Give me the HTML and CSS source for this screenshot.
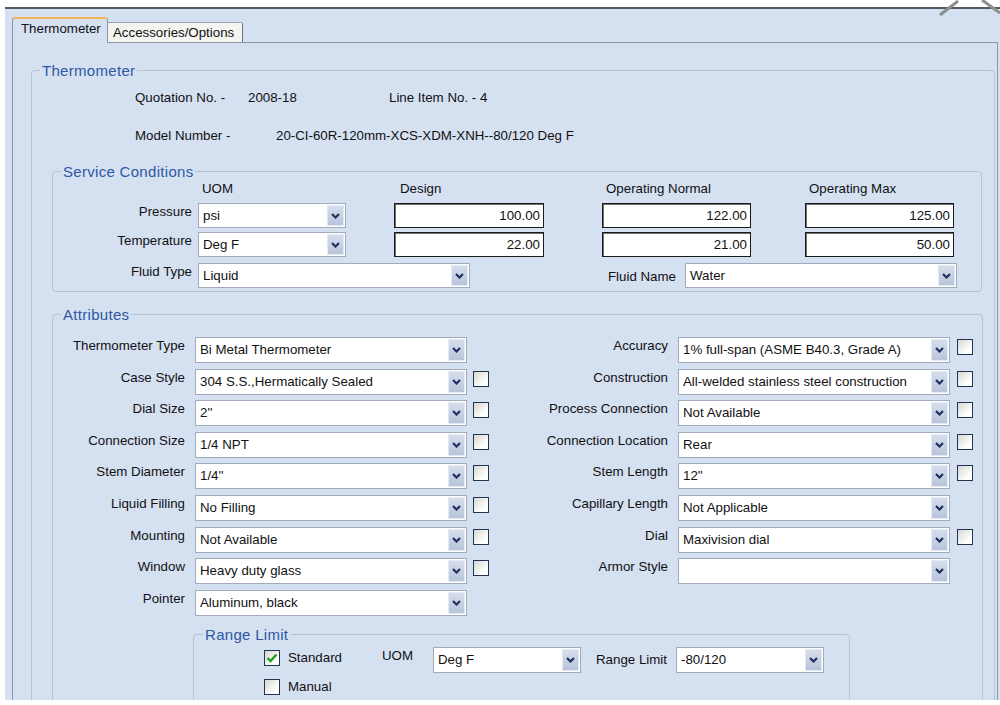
FILE: index.html
```html
<!DOCTYPE html>
<html>
<head>
<meta charset="utf-8">
<link rel="stylesheet" href="styles.css">
</head>
<body>
<div class="screen">
  <div class="topline"></div>
  <div class="frame">
    <div class="tabs">
      <div class="tab active">Thermometer</div>
      <div class="tab inactive">Accessories/Options</div>
    </div>
    <div class="panel">
      <fieldset class="group g-thermo">
        <legend>Thermometer</legend>
        <div class="info">
          <div class="info-row"><span class="il il-q">Quotation No. -</span><span class="iv-q">2008-18</span><span>Line Item No. - 4</span></div>
          <div class="info-row"><span class="il il-m">Model Number -</span><span>20-CI-60R-120mm-XCS-XDM-XNH--80/120 Deg F</span></div>
        </div>

        <fieldset class="group g-service">
          <legend>Service Conditions</legend>
          <div class="sc">
            <div class="sc-head"><span class="h-uom">UOM</span><span class="h-des">Design</span><span class="h-opn">Operating Normal</span><span>Operating Max</span></div>
            <div class="sc-row">
              <span class="sc-lbl">Pressure</span>
              <div class="sel s-uom"><span class="val">psi</span><span class="btn"><svg width="9" height="6" viewBox="0 0 9 6"><path d="M1 1 L4.5 4.5 L8 1"/></svg></span></div>
              <div class="num n-des">100.00</div>
              <div class="num n-opn">122.00</div>
              <div class="num n-opm">125.00</div>
            </div>
            <div class="sc-row sc-row2">
              <span class="sc-lbl">Temperature</span>
              <div class="sel s-uom"><span class="val">Deg F</span><span class="btn"><svg width="9" height="6" viewBox="0 0 9 6"><path d="M1 1 L4.5 4.5 L8 1"/></svg></span></div>
              <div class="num n-des">22.00</div>
              <div class="num n-opn">21.00</div>
              <div class="num n-opm">50.00</div>
            </div>
            <div class="sc-row">
              <span class="sc-lbl">Fluid Type</span>
              <div class="sel s-fluid"><span class="val">Liquid</span><span class="btn"><svg width="9" height="6" viewBox="0 0 9 6"><path d="M1 1 L4.5 4.5 L8 1"/></svg></span></div>
              <span class="fn-lbl">Fluid Name</span>
              <div class="sel s-fname"><span class="val">Water</span><span class="btn"><svg width="9" height="6" viewBox="0 0 9 6"><path d="M1 1 L4.5 4.5 L8 1"/></svg></span></div>
            </div>
          </div>
        </fieldset>

        <fieldset class="group g-attr">
          <legend>Attributes</legend>
          <div class="attr">
            <div class="acol acol-l">
              <div class="arow"><span class="a-lbl">Thermometer Type</span><div class="sel a-sel"><span class="val">Bi Metal Thermometer</span><span class="btn"><svg width="9" height="6" viewBox="0 0 9 6"><path d="M1 1 L4.5 4.5 L8 1"/></svg></span></div></div>
              <div class="arow"><span class="a-lbl">Case Style</span><div class="sel a-sel"><span class="val">304 S.S.,Hermatically Sealed</span><span class="btn"><svg width="9" height="6" viewBox="0 0 9 6"><path d="M1 1 L4.5 4.5 L8 1"/></svg></span></div><span class="chk"></span></div>
              <div class="arow"><span class="a-lbl">Dial Size</span><div class="sel a-sel"><span class="val">2''</span><span class="btn"><svg width="9" height="6" viewBox="0 0 9 6"><path d="M1 1 L4.5 4.5 L8 1"/></svg></span></div><span class="chk"></span></div>
              <div class="arow"><span class="a-lbl">Connection Size</span><div class="sel a-sel"><span class="val">1/4 NPT</span><span class="btn"><svg width="9" height="6" viewBox="0 0 9 6"><path d="M1 1 L4.5 4.5 L8 1"/></svg></span></div><span class="chk"></span></div>
              <div class="arow"><span class="a-lbl">Stem Diameter</span><div class="sel a-sel"><span class="val">1/4''</span><span class="btn"><svg width="9" height="6" viewBox="0 0 9 6"><path d="M1 1 L4.5 4.5 L8 1"/></svg></span></div><span class="chk"></span></div>
              <div class="arow"><span class="a-lbl">Liquid Filling</span><div class="sel a-sel"><span class="val">No Filling</span><span class="btn"><svg width="9" height="6" viewBox="0 0 9 6"><path d="M1 1 L4.5 4.5 L8 1"/></svg></span></div><span class="chk"></span></div>
              <div class="arow"><span class="a-lbl">Mounting</span><div class="sel a-sel"><span class="val">Not Available</span><span class="btn"><svg width="9" height="6" viewBox="0 0 9 6"><path d="M1 1 L4.5 4.5 L8 1"/></svg></span></div><span class="chk"></span></div>
              <div class="arow"><span class="a-lbl">Window</span><div class="sel a-sel"><span class="val">Heavy duty glass</span><span class="btn"><svg width="9" height="6" viewBox="0 0 9 6"><path d="M1 1 L4.5 4.5 L8 1"/></svg></span></div><span class="chk"></span></div>
              <div class="arow"><span class="a-lbl">Pointer</span><div class="sel a-sel"><span class="val">Aluminum, black</span><span class="btn"><svg width="9" height="6" viewBox="0 0 9 6"><path d="M1 1 L4.5 4.5 L8 1"/></svg></span></div></div>
            </div>
            <div class="acol acol-r">
              <div class="arow"><span class="a-lbl">Accuracy</span><div class="sel a-sel"><span class="val">1% full-span (ASME B40.3, Grade A)</span><span class="btn"><svg width="9" height="6" viewBox="0 0 9 6"><path d="M1 1 L4.5 4.5 L8 1"/></svg></span></div><span class="chk"></span></div>
              <div class="arow"><span class="a-lbl">Construction</span><div class="sel a-sel"><span class="val">All-welded stainless steel construction</span><span class="btn"><svg width="9" height="6" viewBox="0 0 9 6"><path d="M1 1 L4.5 4.5 L8 1"/></svg></span></div><span class="chk"></span></div>
              <div class="arow"><span class="a-lbl">Process Connection</span><div class="sel a-sel"><span class="val">Not Available</span><span class="btn"><svg width="9" height="6" viewBox="0 0 9 6"><path d="M1 1 L4.5 4.5 L8 1"/></svg></span></div><span class="chk"></span></div>
              <div class="arow"><span class="a-lbl">Connection Location</span><div class="sel a-sel"><span class="val">Rear</span><span class="btn"><svg width="9" height="6" viewBox="0 0 9 6"><path d="M1 1 L4.5 4.5 L8 1"/></svg></span></div><span class="chk"></span></div>
              <div class="arow"><span class="a-lbl">Stem Length</span><div class="sel a-sel"><span class="val">12''</span><span class="btn"><svg width="9" height="6" viewBox="0 0 9 6"><path d="M1 1 L4.5 4.5 L8 1"/></svg></span></div><span class="chk"></span></div>
              <div class="arow"><span class="a-lbl">Capillary Length</span><div class="sel a-sel"><span class="val">Not Applicable</span><span class="btn"><svg width="9" height="6" viewBox="0 0 9 6"><path d="M1 1 L4.5 4.5 L8 1"/></svg></span></div></div>
              <div class="arow"><span class="a-lbl">Dial</span><div class="sel a-sel"><span class="val">Maxivision dial</span><span class="btn"><svg width="9" height="6" viewBox="0 0 9 6"><path d="M1 1 L4.5 4.5 L8 1"/></svg></span></div><span class="chk"></span></div>
              <div class="arow"><span class="a-lbl">Armor Style</span><div class="sel a-sel"><span class="val"></span><span class="btn"><svg width="9" height="6" viewBox="0 0 9 6"><path d="M1 1 L4.5 4.5 L8 1"/></svg></span></div></div>
            </div>
          </div>

          <fieldset class="group g-range">
            <legend>Range Limit</legend>
            <div class="rng">
              <div class="rchecks">
                <div class="rcheck"><span class="chk checked"><svg width="14" height="14" viewBox="0 0 14 14"><path d="M2.5 7 L5.5 10 L11.5 3.5"/></svg></span><span>Standard</span></div>
                <div class="rcheck rcheck2"><span class="chk"></span><span>Manual</span></div>
              </div>
              <span class="r-uom">UOM</span>
              <div class="sel r-sel"><span class="val">Deg F</span><span class="btn"><svg width="9" height="6" viewBox="0 0 9 6"><path d="M1 1 L4.5 4.5 L8 1"/></svg></span></div>
              <span class="r-lbl">Range Limit</span>
              <div class="sel r-sel"><span class="val">-80/120</span><span class="btn"><svg width="9" height="6" viewBox="0 0 9 6"><path d="M1 1 L4.5 4.5 L8 1"/></svg></span></div>
            </div>
          </fieldset>
        </fieldset>
      </fieldset>
    </div>
  </div>
  <svg class="corner" width="70" height="20" viewBox="0 0 70 20"><path d="M10 15 L28 1"/><path d="M52 0 L70 13"/></svg>
</div>
</body>
</html>
```

FILE: styles.css
```css
* { box-sizing: border-box; }

body {
  margin: 0;
  background: #ffffff;
  font-family: "Liberation Sans", Arial, sans-serif;
  font-size: 13.3px;
  color: #111111;
}

.screen {
  position: relative;
  width: 1000px;
  height: 705px;
  overflow: hidden;
  background: #ffffff;
}

.topline {
  height: 2px;
  margin: 7px 0 0 5px;
  background: #535a63;
}

.frame {
  height: 691px;
  margin-left: 5px;
  background: #d5e0f1;
  overflow: hidden;
}

/* tabs */
.tabs {
  display: flex;
  align-items: flex-end;
  height: 33px;
  padding-left: 7px;
  position: relative;
  z-index: 1;
}

.tab {
  white-space: nowrap;
}

.tab.active {
  width: 96px;
  height: 26px;
  margin-bottom: -1px;
  padding-left: 8px;
  line-height: 20px;
  background: #d5e0f1;
  border: 1px solid #8f99a6;
  border-top: 2px solid #f0b45a;
  border-bottom: none;
  border-radius: 3px 3px 0 0;
}

.tab.inactive {
  width: 135px;
  height: 20px;
  padding-left: 5px;
  line-height: 20px;
  background: #f3f4ef;
  border-top: 1px solid #9aa3ae;
  border-right: 1px solid #6f7780;
  border-radius: 0 2px 0 0;
}

.panel {
  height: 700px;
  margin: 0 2px 0 7px;
  border: 1px solid #8e98a5;
  border-bottom: none;
}

/* group boxes */
.group {
  border: 1px solid #b7c2d3;
  border-radius: 4px;
  padding: 0;
  margin: 0;
  min-width: 0;
}

.group > legend {
  font-size: 15px;
  line-height: 15px;
  color: #2d58a3;
  padding: 0 2px;
  margin-left: 8px;
  letter-spacing: 0.3px;
}

.g-thermo {
  margin: 20px 2px 0 18px;
  padding-bottom: 60px;
}

.info {
  padding-top: 10px;
}

.info-row {
  display: flex;
  height: 20px;
  line-height: 20px;
  white-space: nowrap;
}

.info-row + .info-row { margin-top: 18px; }

.il { margin-left: 103px; }
.il-q { width: 113px; }
.iv-q { width: 141px; }
.il-m { width: 141px; }

/* service conditions */
.g-service {
  margin: 18px 12px 0 20px;
}

.sc { padding-bottom: 3px; }

.sc-head {
  display: flex;
  height: 16px;
  line-height: 16px;
  margin-top: 2px;
  white-space: nowrap;
}

.h-uom { margin-left: 149px; width: 198px; }
.h-des { width: 206px; }
.h-opn { width: 203px; }

.sc-row {
  display: flex;
  height: 25px;
  margin-top: 6px;
}

.sc-row2 { margin-top: 4px; }

.sc-lbl {
  width: 139px;
  text-align: right;
  line-height: 16px;
  padding-top: 1px;
  white-space: nowrap;
}

/* combo box */
.sel {
  display: flex;
  height: 100%;
  background: #ffffff;
  border: 1px solid #a1abbc;
  flex: none;
}

.sel .val {
  flex: 1;
  min-width: 0;
  padding-left: 4px;
  padding-top: 1px;
  line-height: 22px;
  white-space: nowrap;
  overflow: hidden;
}

.sel .btn {
  width: 17px;
  margin: 1px;
  background: linear-gradient(#d6deed, #b8c4da);
  border: 1px solid #e4eaf4;
  display: flex;
  align-items: center;
  justify-content: center;
}

.sel .btn svg path {
  fill: none;
  stroke: #22305e;
  stroke-width: 2.2;
}

.s-uom { margin-left: 6px; width: 148px; }
.s-fluid { margin-left: 6px; width: 272px; }
.s-fname { width: 272px; }

.fn-lbl {
  margin-left: 138px;
  width: 77px;
  padding-top: 4px;
  line-height: 20px;
  white-space: nowrap;
}

/* numeric text boxes */
.num {
  height: 100%;
  background: #ffffff;
  border: 1px solid #1a1a1a;
  box-shadow: inset 1px 1px 0 #707070;
  text-align: right;
  padding-right: 3px;
  padding-top: 1px;
  line-height: 21px;
  flex: none;
}

.n-des { margin-left: 48px; width: 150px; }
.n-opn { margin-left: 58px; width: 149px; }
.n-opm { margin-left: 54px; width: 149px; }

/* attributes */
.g-attr {
  margin: 15px 11px 0 20px;
}

.attr {
  display: flex;
  padding-top: 15px;
}

.acol-l { width: 436px; }
.acol-r { margin-left: 29px; }

.arow {
  display: flex;
  height: 26px;
}

.arow + .arow { margin-top: 5.6px; }

.a-lbl {
  text-align: right;
  line-height: 16px;
  padding-top: 1px;
  white-space: nowrap;
  flex: none;
}

.acol-l .a-lbl { width: 132px; }
.acol-r .a-lbl { width: 150px; }

.a-sel { margin-left: 10px; width: 272px; }

.chk {
  width: 16px;
  height: 16px;
  flex: none;
  border: 1px solid #1f3552;
  background: linear-gradient(135deg, #d8d8d0, #ffffff 75%);
  display: flex;
  align-items: center;
  justify-content: center;
}

.arow .chk { margin-top: 2px; }
.acol-l .chk { margin-left: 6px; }
.acol-r .chk { margin-left: 7px; }

.chk.checked svg path {
  fill: none;
  stroke: #21a121;
  stroke-width: 2.4;
}

/* range limit */
.g-range {
  margin: 11.5px 0 0 140px;
  width: 657px;
}

.g-range > legend { margin-left: 9px; }

.rng {
  display: flex;
  padding-top: 4.5px;
  padding-bottom: 40px;
}

.rchecks {
  margin-left: 70px;
  width: 118px;
}

.rcheck {
  display: flex;
  align-items: center;
  height: 16px;
  margin-top: 3px;
  white-space: nowrap;
}

.rcheck2 { margin-top: 13px; }

.rcheck .chk { margin-right: 8px; }

.r-uom {
  width: 51px;
  line-height: 16px;
  padding-top: 1px;
}

.r-sel {
  width: 148px;
  height: 26px;
}

.r-lbl {
  margin-left: 15px;
  width: 80px;
  line-height: 26px;
  white-space: nowrap;
}

/* top-right close mark fragment */
.corner {
  position: absolute;
  top: 0;
  right: 0;
}

.corner path {
  fill: none;
  stroke: #8e8e8e;
  stroke-width: 3;
}
```
